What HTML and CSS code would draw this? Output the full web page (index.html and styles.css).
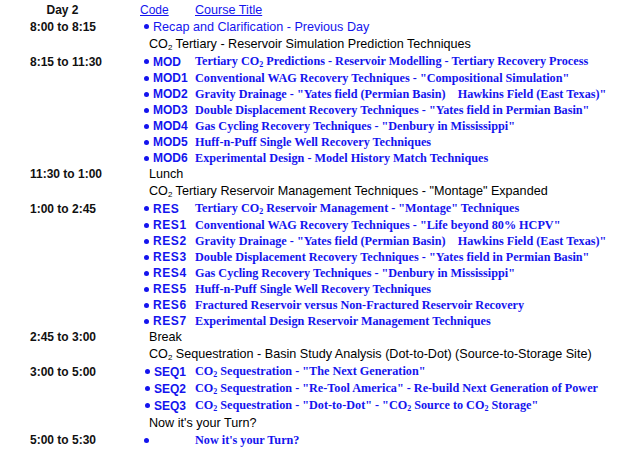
FILE: index.html
```html
<!DOCTYPE html>
<html>
<head>
<meta charset="utf-8">
<link rel="stylesheet" href="styles.css">
</head>
<body>
<div class="sched">
  <div class="row r17 hdr">
    <div class="time center">Day 2</div>
    <div class="code"><u>Code</u></div>
    <div class="title sans"><u>Course Title</u></div>
  </div>
  <div class="row r17">
    <div class="time">8:00 to 8:15</div>
    <div class="span sans blue"><span class="dot"></span>Recap and Clarification - Previous Day</div>
  </div>
  <div class="row r18">
    <div class="time"></div>
    <div class="span head">CO<sub>2</sub> Tertiary - Reservoir Simulation Prediction Techniques</div>
  </div>
  <div class="row r17">
    <div class="time">8:15 to 11:30</div>
    <div class="code"><span class="dot"></span>MOD</div>
    <div class="title">Tertiary CO<sub>2</sub> Predictions - Reservoir Modelling - Tertiary Recovery Process</div>
  </div>
  <div class="row r16">
    <div class="time"></div>
    <div class="code"><span class="dot"></span>MOD1</div>
    <div class="title">Conventional WAG Recovery Techniques - "Compositional Simulation"</div>
  </div>
  <div class="row r16">
    <div class="time"></div>
    <div class="code"><span class="dot"></span>MOD2</div>
    <div class="title">Gravity Drainage - "Yates field (Permian Basin)&nbsp;&nbsp;&nbsp;&nbsp;Hawkins Field (East Texas)"</div>
  </div>
  <div class="row r16">
    <div class="time"></div>
    <div class="code"><span class="dot"></span>MOD3</div>
    <div class="title">Double Displacement Recovery Techniques - "Yates field in Permian Basin"</div>
  </div>
  <div class="row r16">
    <div class="time"></div>
    <div class="code"><span class="dot"></span>MOD4</div>
    <div class="title">Gas Cycling Recovery Techniques - "Denbury in Mississippi"</div>
  </div>
  <div class="row r16">
    <div class="time"></div>
    <div class="code"><span class="dot"></span>MOD5</div>
    <div class="title">Huff-n-Puff Single Well Recovery Techniques</div>
  </div>
  <div class="row r16">
    <div class="time"></div>
    <div class="code"><span class="dot"></span>MOD6</div>
    <div class="title">Experimental Design - Model History Match Techniques</div>
  </div>
  <div class="row r16">
    <div class="time">11:30 to 1:00</div>
    <div class="span head">Lunch</div>
  </div>
  <div class="row r18">
    <div class="time"></div>
    <div class="span head">CO<sub>2</sub> Tertiary Reservoir Management Techniques - "Montage" Expanded</div>
  </div>
  <div class="row r17">
    <div class="time">1:00 to 2:45</div>
    <div class="code res"><span class="dot"></span>RES</div>
    <div class="title">Tertiary CO<sub>2</sub> Reservoir Management - "Montage" Techniques</div>
  </div>
  <div class="row r16">
    <div class="time"></div>
    <div class="code res"><span class="dot"></span>RES1</div>
    <div class="title">Conventional WAG Recovery Techniques - "Life beyond 80% HCPV"</div>
  </div>
  <div class="row r16">
    <div class="time"></div>
    <div class="code res"><span class="dot"></span>RES2</div>
    <div class="title">Gravity Drainage - "Yates field (Permian Basin)&nbsp;&nbsp;&nbsp;&nbsp;Hawkins Field (East Texas)"</div>
  </div>
  <div class="row r16">
    <div class="time"></div>
    <div class="code res"><span class="dot"></span>RES3</div>
    <div class="title">Double Displacement Recovery Techniques - "Yates field in Permian Basin"</div>
  </div>
  <div class="row r16">
    <div class="time"></div>
    <div class="code res"><span class="dot"></span>RES4</div>
    <div class="title">Gas Cycling Recovery Techniques - "Denbury in Mississippi"</div>
  </div>
  <div class="row r16">
    <div class="time"></div>
    <div class="code res"><span class="dot"></span>RES5</div>
    <div class="title">Huff-n-Puff Single Well Recovery Techniques</div>
  </div>
  <div class="row r16">
    <div class="time"></div>
    <div class="code res"><span class="dot"></span>RES6</div>
    <div class="title">Fractured Reservoir versus Non-Fractured Reservoir Recovery</div>
  </div>
  <div class="row r16">
    <div class="time"></div>
    <div class="code res"><span class="dot"></span>RES7</div>
    <div class="title">Experimental Design Reservoir Management Techniques</div>
  </div>
  <div class="row r16">
    <div class="time">2:45 to 3:00</div>
    <div class="span head">Break</div>
  </div>
  <div class="row r18">
    <div class="time"></div>
    <div class="span head">CO<sub>2</sub> Sequestration - Basin Study Analysis (Dot-to-Dot) (Source-to-Storage Site)</div>
  </div>
  <div class="row r17">
    <div class="time">3:00 to 5:00</div>
    <div class="code seq"><span class="dot"></span>SEQ1</div>
    <div class="title">CO<sub>2</sub> Sequestration - "The Next Generation"</div>
  </div>
  <div class="row r17">
    <div class="time"></div>
    <div class="code seq"><span class="dot"></span>SEQ2</div>
    <div class="title">CO<sub>2</sub> Sequestration - "Re-Tool America" - Re-build Next Generation of Power</div>
  </div>
  <div class="row r17">
    <div class="time"></div>
    <div class="code seq"><span class="dot"></span>SEQ3</div>
    <div class="title">CO<sub>2</sub> Sequestration - "Dot-to-Dot" - "CO<sub>2</sub> Source to CO<sub>2</sub> Storage"</div>
  </div>
  <div class="row r17">
    <div class="time"></div>
    <div class="span head">Now it's your Turn?</div>
  </div>
  <div class="row r18">
    <div class="time">5:00 to 5:30</div>
    <div class="code"><span class="dot"></span></div>
    <div class="title">Now it's your Turn?</div>
  </div>
</div>
</body>
</html>
```

FILE: styles.css
```css
html, body {
  margin: 0;
  padding: 0;
  background: #ffffff;
}

.sched {
  padding: 1px 0 0 30px;
  font-family: "Liberation Sans", Arial, sans-serif;
  font-size: 12px;
  color: #000000;
}

.row {
  display: grid;
  grid-template-columns: 110px 55px 1fr;
  align-items: center;
  white-space: nowrap;
}

.r16 { height: 16px; }
.r17 { height: 17px; }
.r18 { height: 18px; }

.time {
  font-weight: bold;
  color: #111111;
}

.center {
  text-align: center;
  width: 65px;
}

.code {
  color: #1414ee;
  padding-left: 4px;
  font-weight: bold;
  display: flex;
  align-items: center;
}

.code.res {
  letter-spacing: 0.6px;
}

.code.seq {
  padding-left: 5px;
}

.dot {
  display: inline-block;
  width: 5px;
  height: 5px;
  border-radius: 50%;
  background: #1414ee;
  margin-right: 4px;
  flex: none;
}

.title {
  font-family: "Liberation Serif", "Times New Roman", serif;
  font-weight: bold;
  font-size: 12.2px;
  color: #1414ee;
}

.title.sans {
  font-family: "Liberation Sans", Arial, sans-serif;
  font-weight: normal;
  font-size: 12.6px;
}

.hdr .code {
  padding-left: 0;
  font-weight: normal;
}

.span {
  grid-column: 2 / 4;
}

.span.blue {
  color: #1414ee;
  padding-left: 4px;
  font-size: 12.6px;
  display: flex;
  align-items: center;
}

.head {
  padding-left: 9px;
  color: #000000;
  font-size: 12.6px;
}

sub {
  font-size: 8px;
  line-height: 0;
  vertical-align: -2px;
}

u {
  text-decoration: underline;
}
```
